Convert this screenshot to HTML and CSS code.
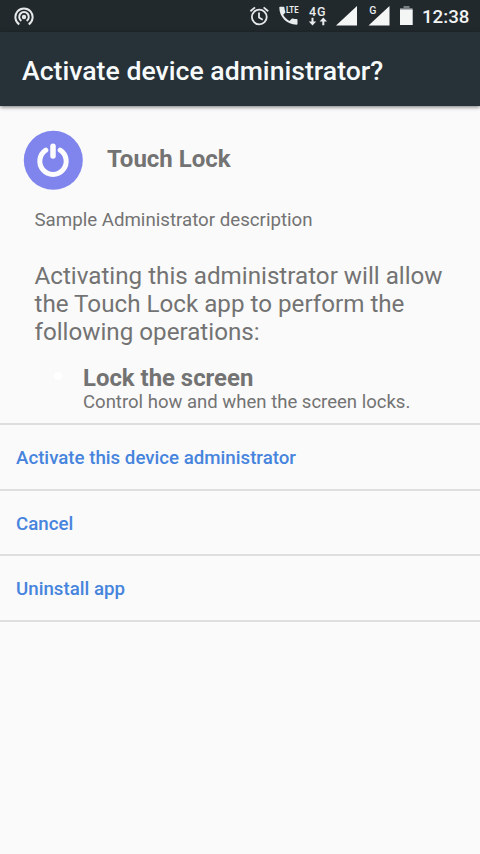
FILE: index.html
```html
<!DOCTYPE html>
<html lang="en">
<head>
<meta charset="utf-8">
<title>Activate device administrator</title>
<link rel="stylesheet" href="styles.css">
</head>
<body>
<div class="status">
  <svg class="hotspot" width="20" height="20" viewBox="0 0 20 20" fill="none" stroke="#e6e9ea" stroke-width="2"><circle cx="10" cy="10" r="2.2" fill="#e6e9ea" stroke="none"/><path d="M7.4 13.9a4.8 4.8 0 1 1 5.2 0"/><path d="M5.3 17.3a8.600 8.600 0 1 1 9.400 0"/></svg>
  <svg class="tray" width="176" height="32" viewBox="248 0 176 32">
    <g fill="none" stroke="#e6e9ea" stroke-width="1.800"><circle cx="259.300" cy="17" r="7.400"/><path d="M259 12.500v5l3.700 2.300"/><path d="M250.400 11.200l4.600-3.800M268.200 11.200l-4.600-3.800"/></g>
    <path fill="#e9eced" d="M280 6.800h3.500q.8 0 .9.800c.1 1.500.3 2.900.9 4.200q.2.700-.3 1.200l-1.800 1.800c1.500 2.700 3.600 4.700 6.300 6.200l2.200-2.200q.5-.5 1.200-.3c1.200.4 2.400.6 3.600.6q1 0 1 1v3.700q0 1-1 1c-9.500 0-17.200-7.700-17.200-17.200q0-.8.700-.8z"/>
    <text class="lte" x="286" y="13" textLength="12.500" lengthAdjust="spacingAndGlyphs">LTE</text>
    <text class="four-g" x="309" y="15.800">4G</text>
    <path fill="#e9eced" d="M311.500 17.800h2v3.800h2.700l-3.700 3.800-3.700-3.800h2.700zM322.300 25.200h2v-3.800h2.700l-3.700-3.800-3.700 3.800h2.700z"/>
    <path fill="#f4f5f5" d="M357 6v19.500h-21zM389.500 6v19.500h-21z"/>
    <path fill="#22292d" d="M367 4h11v11h-11z"/>
    <text class="g" x="369.300" y="13.500">G</text>
    <path fill="#777d80" d="M403.500 6h6v2h3v2.500h-12.500v-2.500h3.500z"/>
    <path fill="#f4f5f5" d="M400 9.500h12.700v15.500h-12.700z"/>
  </svg>
  <span class="clock">12:38</span>
</div>
<header class="bar"><h1>Activate device administrator?</h1></header>
<main>
  <div class="app">
    <svg width="60" height="60" viewBox="0 0 60 60"><circle cx="30.300" cy="30.300" r="29.500" fill="#8085ed"/><g fill="none" stroke="#fcfcff" stroke-linecap="round"><path stroke-width="5" d="M22.800 20.200a13.200 13.200 0 1 0 14.400 0"/><path stroke-width="5.500" d="M30 16.200v9.800"/></g></svg>
    <h2>Touch Lock</h2>
  </div>
  <p class="description">Sample Administrator description</p>
  <p class="warning">Activating this administrator will allow<br>the Touch Lock app to perform the<br>following operations:</p>
  <div class="policy">
    <i class="dot"></i>
    <div><h3>Lock the screen</h3><p>Control how and when the screen locks.</p></div>
  </div>
</main>
<nav class="actions">
  <a>Activate this device administrator</a>
  <a>Cancel</a>
  <a>Uninstall app</a>
</nav>
</body>
</html>
```
FILE: styles.css
```css
* { box-sizing: border-box; margin: 0; padding: 0; }
body { width: 480px; height: 854px; overflow: hidden; background: #fafafa; color: #737373; font-family: Roboto, sans-serif; }
svg { display: block; flex: none; }
.status { display: flex; align-items: center; height: 32px; background: #22292d; }
.hotspot { margin: 1px 0 0 14px; }
.tray { margin-left: 214px; }
.tray text { fill: #e9eced; font-weight: 500; }
.tray .lte { font-size: 8.500px; font-weight: 700; }
.tray .four-g { font-size: 12.500px; letter-spacing: .8px; }
.tray .g { font-size: 10.500px; }
.clock { margin-left: -2px; padding-top: 1px; color: #f2f4f4; font-size: 18.700px; font-weight: 500; line-height: 32px; white-space: nowrap; }
.bar { display: flex; align-items: center; height: 74px; padding: 4px 22px 0; background: #263138; box-shadow: 0 1px 4px rgba(0, 0, 0, .55); }
h1 { color: #f6fafb; font-size: 26.650px; font-weight: 500; line-height: 32px; white-space: nowrap; }
main { height: 319px; padding-top: 24px; border-bottom: 2px solid #dfdfdf; }
.app { display: flex; gap: 24px; height: 60px; padding-left: 23px; }
h2 { font-size: 24px; font-weight: 700; line-height: 58px; white-space: nowrap; }
.description { margin: 19px 0 0 34.500px; font-size: 18.700px; line-height: 22px; white-space: nowrap; }
.warning { margin: 31px 0 0 34.500px; font-size: 24.200px; line-height: 28px; white-space: nowrap; }
.policy { display: flex; margin-top: 18px; padding-left: 54px; white-space: nowrap; }
.dot { width: 8px; height: 8px; margin: 8px 21px 0 0; border-radius: 50%; background: #fff; }
h3 { font-size: 23.900px; font-weight: 700; line-height: 28px; }
.policy p { font-size: 18.550px; line-height: 20px; }
.actions a { display: flex; align-items: center; height: 65.500px; padding: 3px 16px 0; border-bottom: 2px solid #dfdfdf; color: #4684dd; font-size: 18.700px; font-weight: 500; white-space: nowrap; }
```
